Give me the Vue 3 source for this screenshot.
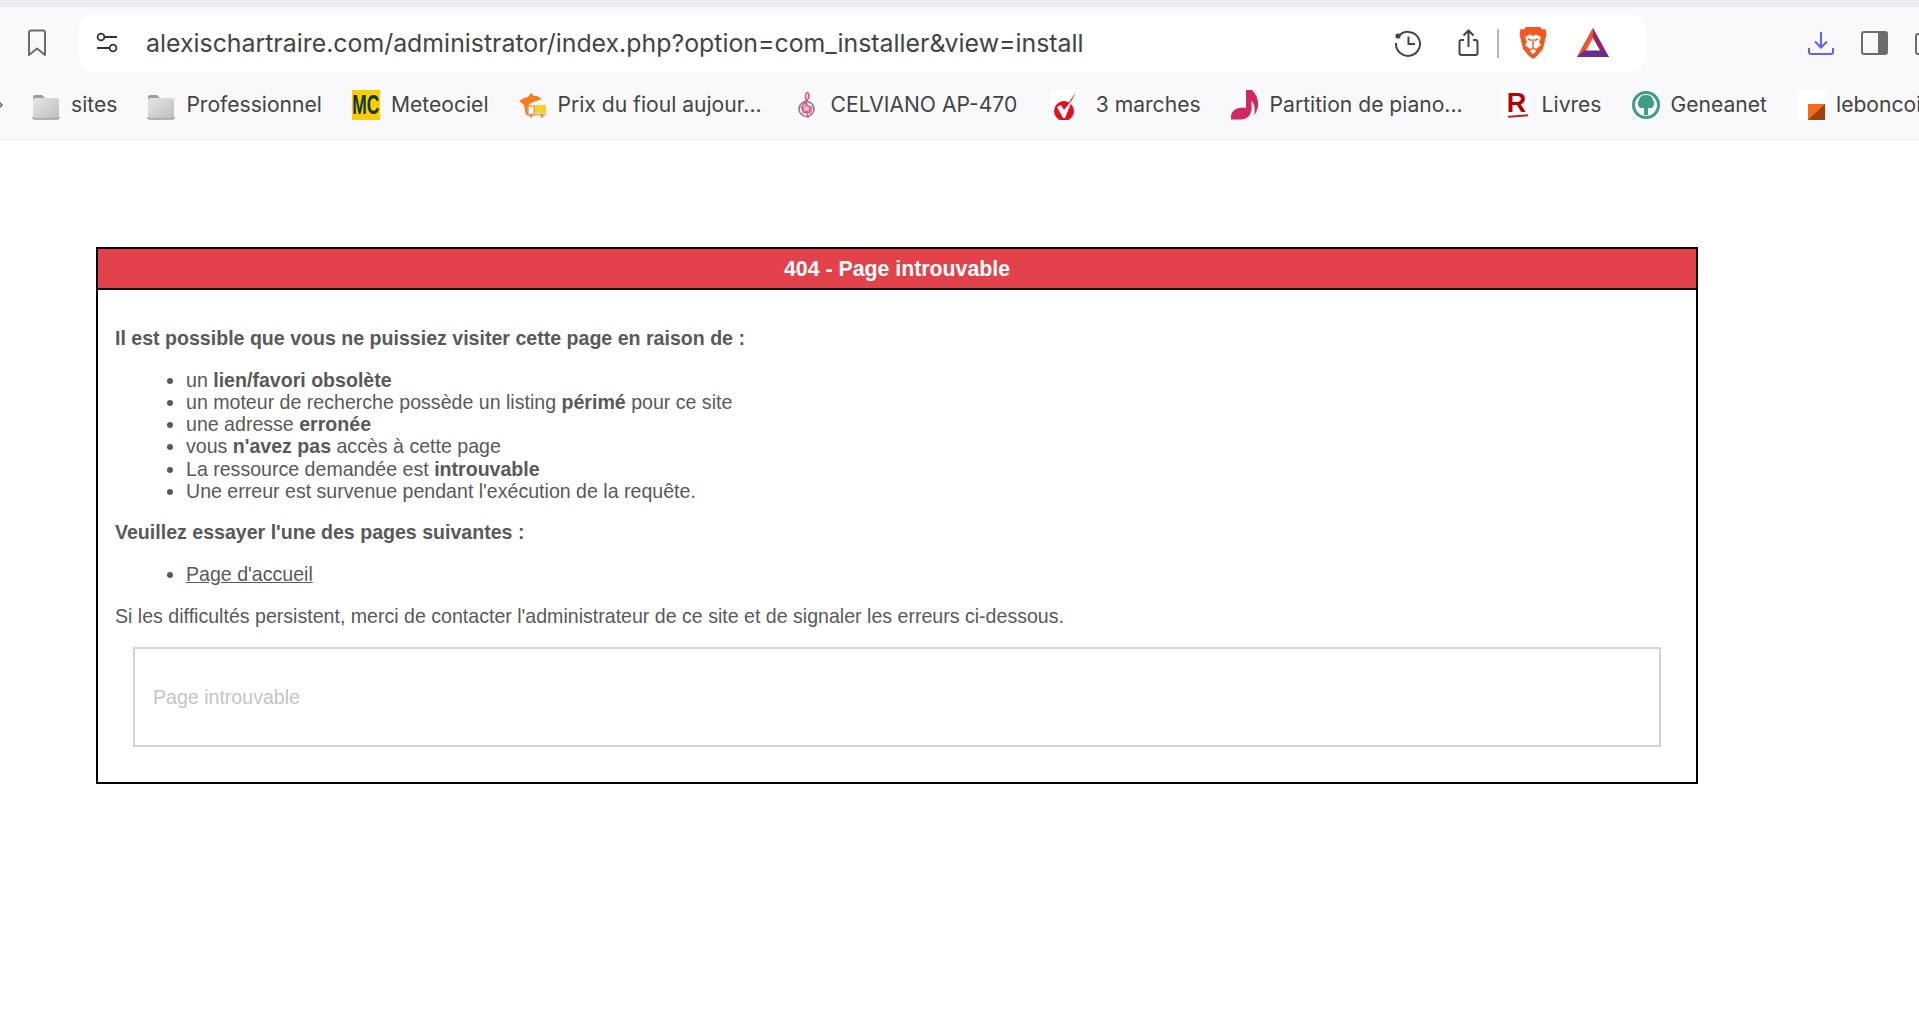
<script setup>
const marks = [
  { id: 'folder', label: 'sites' },
  { id: 'folder', label: 'Professionnel' },
  { id: 'mc', label: 'Meteociel' },
  { id: 'fioul', label: 'Prix du fioul aujour...' },
  { id: 'clef', label: 'CELVIANO AP-470', after: 2.5 },
  { id: 'check', label: '3 marches', wide: true },
  { id: 'note', label: 'Partition de piano...', after: 10 },
  { id: 'rakuten', label: 'Livres' },
  { id: 'geneanet', label: 'Geneanet' },
  { id: 'lbc', label: 'leboncoin' }
]
</script>

<template>
  <div class="page">
    <header class="chrome">
      <div class="strip"></div>
      <div class="toolbar">
        <svg class="bookmark" viewBox="0 0 20 28" fill="none" stroke="#6b6b6f" stroke-width="2"><path d="M2 3.5Q2 1.5 4 1.5H16Q18 1.5 18 3.5V26L10 19.5L2 26Z" stroke-linejoin="round"/></svg>
        <div class="address">
          <svg class="tune" viewBox="0 0 24 24" fill="none" stroke="#333" stroke-width="1.8"><circle cx="6" cy="6" r="3.4"/><path d="M9.5 6H22M2 17H14.5"/><circle cx="18" cy="17" r="3.4"/></svg>
          <span class="url">alexischartraire.com/administrator/index.php?option=com_installer&amp;view=install</span>
          <div class="actions">
            <svg class="history" viewBox="0 0 28 28" fill="none" stroke="#444" stroke-width="2"><path d="M4.5 7.5A12 12 0 1 1 2 14"/><circle cx="4" cy="7" r="2.6" fill="#444" stroke="none"/><path d="M14.5 7.5V15H21"/></svg>
            <svg class="share" viewBox="0 0 21 28" fill="none" stroke="#444" stroke-width="2"><path d="M6 11H3.5Q1.5 11 1.5 13V24Q1.5 26 3.5 26H17.5Q19.5 26 19.5 24V13Q19.5 11 17.5 11H15M10.5 18V2M5.5 6.5L10.5 1.5L15.5 6.5"/></svg>
            <i class="sep"></i>
            <svg class="brave" viewBox="0 0 28 33"><path d="M7 1H21L23.5 3.5L26.5 3L27.5 9L26 14L24 23L18 30L14 33L10 30L4 23L2 14L.5 9L1.5 3L4.5 3.5Z" fill="#f4571f"/><path d="M6 11L11 8.5L14 10L17 8.5L22 11L20 16L22 19L17 23L16.5 26L14 28L11.5 26L11 23L6 19L8 16Z" fill="#fff"/><path d="M9 13L12.5 14.5M19 13L15.5 14.5M14 13V23M11 24L14 22L17 24" stroke="#f4571f" stroke-width="1.4" fill="none"/></svg>
            <svg class="bat" viewBox="0 0 32 29"><path d="M16 0L32 29H0Z" fill="#9e1f63"/><path d="M16 0L0 29L10 23L16 11Z" fill="#f4532a"/><path d="M0 29H32L26 22.5H7Z" fill="#662d91"/><path d="M16 10L23 22.5H9Z" fill="#fff"/></svg>
          </div>
        </div>
        <div class="side-icons">
          <svg class="download" viewBox="0 0 26 24" fill="none" stroke="#5f62f5" stroke-width="2"><path d="M13 1V16M7 10.5L13 16.5L19 10.5M1 17V21Q1 23 3 23H23Q25 23 25 21V17"/></svg>
          <svg class="panel" viewBox="0 0 27 24"><rect x="1" y="1" width="25" height="22" rx="2" fill="none" stroke="#6d6d70" stroke-width="2"/><path d="M17 1H24Q26 1 26 3V21Q26 23 24 23H17Z" fill="#6d6d70"/></svg>
          <svg class="clipped" viewBox="0 0 27 24" fill="none" stroke="#6d6d70" stroke-width="2"><rect x="1" y="3" width="25" height="20" rx="2"/><path d="M6 1H20"/></svg>
        </div>
      </div>
      <nav class="marks">
        <svg class="overflow-tail" viewBox="0 0 3 12" fill="none" stroke="#555" stroke-width="1.3"><path d="M-3 1L2 6L-3 11"/></svg>
        <div v-for="m in marks" :key="m.label" class="mark" :class="{ wide: m.wide }" :style="{ marginRight: m.after ? m.after + 'px' : null }">
          <span class="favicon">
            <svg v-if="m.id === 'folder'" viewBox="0 0 28 30"><defs><linearGradient id="fold" x1="0" y1="0" x2="1" y2="1"><stop offset="0" stop-color="#e6e6e6"/><stop offset="1" stop-color="#bdbdbd"/></linearGradient></defs><path d="M1 10V7Q1 5 3 5H10L13 8V10Z" fill="#9c9c9c"/><rect x="1" y="8" width="26" height="21" rx="2.5" fill="url(#fold)"/><path d="M1 27Q1 29 3 29H25Q27 29 27 27" fill="none" stroke="#9e9e9e" stroke-width="1.5"/></svg>
            <span v-else-if="m.id === 'mc'" class="mc"><b>MC</b></span>
            <svg v-else-if="m.id === 'fioul'" viewBox="0 0 28 30"><path d="M12 3L15 6L18 6L23 9L17 11L10 14L9.5 25L7 25L5 15L0 11L5 8L9 7Z" fill="#f47b1c"/><rect x="15" y="15" width="12" height="8" fill="#f8cf2c"/><rect x="9" y="16" width="6" height="9" fill="#fff" stroke="#f39a5b" stroke-width="1.5"/><path d="M9 24.5H27" stroke="#f39a5b" stroke-width="1.5"/><circle cx="12" cy="26" r="1.5" fill="#e98647"/><circle cx="23" cy="26" r="1.5" fill="#e98647"/></svg>
            <svg v-else-if="m.id === 'clef'" viewBox="0 0 28 30" fill="none"><circle cx="14.5" cy="19" r="7.5" stroke="#6c8896" stroke-width="1.6"/><path d="M16 28L13.5 6Q14 2 16 3Q18 5 16 9L11 15Q9 19 12 22Q16 24 19 21Q20 17 16 16Q13 17 14 20" stroke="#ef4f74" stroke-width="1.6"/><path d="M14.5 13L16 17L20 17L17 19.5L18 23L14.5 21L11 23L12 19.5L9 17L13 17Z" stroke="#f0557a" stroke-width="1.2" fill="#fbd5de"/></svg>
            <svg v-else-if="m.id === 'check'" viewBox="0 0 28 30"><rect width="28" height="30" fill="#fff"/><circle cx="14" cy="21" r="10" fill="#e8101c"/><path d="M7 17L11 15L14 20L24 6L15 28H13Z" fill="#fff"/><path d="M14 20L26 2L22 10Z" fill="#e8101c"/></svg>
            <svg v-else-if="m.id === 'note'" viewBox="0 0 28 30"><path d="M15 0H21Q28 7 27 16Q26 22 23 25Q25 15 20.5 11V20Q19 29 10 29.5H0Q-1 20 8 18Q12 17 15 18Z" fill="#d1295f"/></svg>
            <span v-else-if="m.id === 'rakuten'" class="rakuten">R<i></i></span>
            <svg v-else-if="m.id === 'geneanet'" viewBox="0 0 28 30"><circle cx="14" cy="15" r="12.5" fill="#fff" stroke="#3f9c85" stroke-width="3"/><path d="M14 5Q20 5 21 10Q24 14 20 18H16V25H12V18H8Q4 14 7 10Q8 5 14 5Z" fill="#3f9c85"/></svg>
            <svg v-else viewBox="0 0 28 30"><rect width="28" height="30" fill="#fff"/><rect x="11" y="14" width="17" height="16" fill="#f56b1c"/><path d="M28 14V30H11Z" fill="#9a4310"/></svg>
          </span>
          <span class="mark-label">{{ m.label }}</span>
        </div>
      </nav>
    </header>

    <section class="error-box">
      <h1>404 - Page introuvable</h1>
      <div class="error-body">
        <p class="lead"><strong>Il est possible que vous ne puissiez visiter cette page en raison de :</strong></p>
        <ul>
          <li>un <strong>lien/favori obsolète</strong></li>
          <li>un moteur de recherche possède un listing <strong>périmé</strong> pour ce site</li>
          <li>une adresse <strong>erronée</strong></li>
          <li>vous <strong>n'avez pas</strong> accès à cette page</li>
          <li>La ressource demandée est <strong>introuvable</strong></li>
          <li>Une erreur est survenue pendant l'exécution de la requête.</li>
        </ul>
        <p><strong>Veuillez essayer l'une des pages suivantes :</strong></p>
        <ul>
          <li><a href="#">Page d'accueil</a></li>
        </ul>
        <p>Si les difficultés persistent, merci de contacter l'administrateur de ce site et de signaler les erreurs ci-dessous.</p>
        <blockquote>Page introuvable</blockquote>
      </div>
    </section>
  </div>
</template>

<style>
html, body { margin: 0; background: #fff; overflow: hidden; }
</style>

<style scoped>
.page { height: 1010px; overflow: hidden; font-family: "Liberation Sans", Arial, sans-serif; }
.chrome { background: #f9f9fb; border-bottom: 1px solid #efeff1; height: 140px; box-sizing: border-box; overflow: hidden; }
.strip { height: 7px; background: #ecedf2; }
.toolbar { display: flex; align-items: center; height: 58px; margin-top: 7px; }
.bookmark { width: 20px; height: 28px; margin-left: 27px; flex: none; }
.address { display: flex; align-items: center; width: 1568px; height: 58px; margin-left: 31px; background: #fff; border-radius: 16px; flex: none; }
.tune { width: 24px; height: 24px; margin-left: 17px; flex: none; }
.url { margin-left: 27px; font-family: Inter, sans-serif; font-size: 24.87px; color: #444; white-space: nowrap; }
.actions { display: flex; align-items: center; margin-left: auto; margin-right: 37px; }
.history { width: 28px; height: 28px; }
.share { width: 21px; height: 28px; margin-left: 36px; }
.sep { width: 2px; height: 29px; margin-left: 18px; background: #b5b5b8; }
.brave { width: 28px; height: 33px; margin: 0 0 2px 20px; }
.bat { width: 32px; height: 29px; margin: 0 0 2px 30px; }
.side-icons { display: flex; align-items: center; margin-left: 162px; gap: 27px; flex: none; }
.download { width: 26px; height: 24px; }
.panel, .clipped { width: 27px; height: 24px; flex: none; }
.marks { display: flex; gap: 30px; align-items: center; height: 34px; margin-top: 16px; white-space: nowrap; }
.overflow-tail { width: 3px; height: 12px; margin-right: -1px; flex: none; }
.mark { display: flex; align-items: center; gap: 11px; flex: none; }
.mark.wide { gap: 18px; }
.favicon { display: block; width: 28px; height: 30px; flex: none; }
.favicon svg { display: block; width: 28px; height: 30px; }
.mc { display: flex; justify-content: center; height: 30px; background: #fc0; overflow: hidden; }
.mc b { color: #0a3a30; font: bold 28px/30px "Liberation Sans", sans-serif; transform: scaleX(.62); }
.rakuten { display: block; position: relative; height: 30px; background: #fff; color: #b40000; font: bold 27px/27px "Liberation Sans", sans-serif; text-align: center; }
.rakuten i { position: absolute; left: 5px; right: 3px; bottom: 3px; height: 2px; background: #c9201e; transform: rotate(-4deg); }
.mark-label { margin-bottom: 2px; font-family: Inter, sans-serif; font-size: 21.1px; color: #444; }
.error-box { box-sizing: border-box; width: 1602px; height: 537px; margin: 107px 0 0 96px; border: 2px solid #000; }
h1 { margin: 0; height: 41px; box-sizing: border-box; background: #e4424a; border-bottom: 2px solid #111; color: #fff; font-size: 21.3px; line-height: 41px; text-align: center; }
.error-body { padding: 0 17px; font-size: 19.58px; line-height: 22.2px; color: #595959; }
p { margin: 19.5px 0; }
.lead { margin-top: 37px; }
ul { margin: 19.5px 0; padding-left: 71px; }
a { color: #595959; }
blockquote { box-sizing: border-box; height: 100px; margin: 19px 18px 0; padding: 0 18px; border: 2px solid #d4d4d4; color: #c4c4c4; line-height: 96px; }
</style>
